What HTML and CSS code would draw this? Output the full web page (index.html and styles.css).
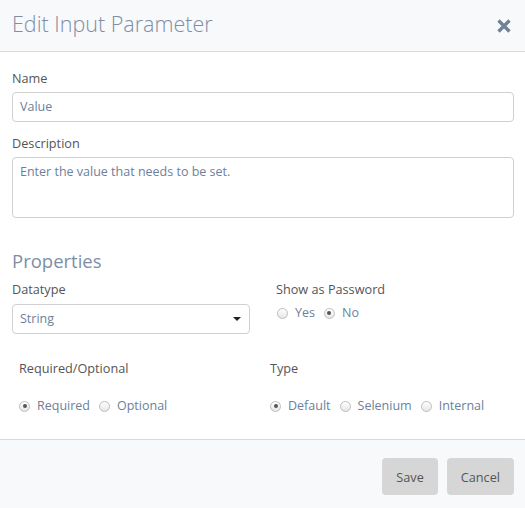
FILE: index.html
```html
<!DOCTYPE html>
<html>
<head>
<meta charset="utf-8">
<link rel="stylesheet" href="styles.css">
</head>
<body>
<div class="modal">
  <div class="header">
    <h1 class="title">Edit Input Parameter</h1>
    <svg class="close" width="16" height="16" viewBox="0 0 16 16"><path d="M2.5 2.5 L13.5 13.5 M13.5 2.5 L2.5 13.5" stroke="#6f8296" stroke-width="3.4" stroke-linecap="butt"/></svg>
  </div>
  <div class="content">
    <div class="label l-name">Name</div>
    <div class="input">Value</div>
    <div class="label l-desc">Description</div>
    <div class="textarea">Enter the value that needs to be set.</div>
    <h2 class="section">Properties</h2>
    <div class="cols">
      <div class="col">
        <div class="label">Datatype</div>
        <div class="select"><span>String</span><span class="caret"></span></div>
      </div>
      <div class="col">
        <div class="label">Show as Password</div>
        <div class="radios pw">
          <span class="radio"></span><span class="rlabel">Yes</span>
          <span class="radio on"></span><span class="rlabel">No</span>
        </div>
      </div>
    </div>
    <div class="cols cols2">
      <div class="col req">
        <div class="label">Required/Optional</div>
        <div class="radios">
          <span class="radio on"></span><span class="rlabel">Required</span>
          <span class="radio"></span><span class="rlabel">Optional</span>
        </div>
      </div>
      <div class="col type">
        <div class="label">Type</div>
        <div class="radios">
          <span class="radio on"></span><span class="rlabel">Default</span>
          <span class="radio"></span><span class="rlabel">Selenium</span>
          <span class="radio"></span><span class="rlabel">Internal</span>
        </div>
      </div>
    </div>
  </div>
  <div class="footer">
    <button class="btn">Save</button>
    <button class="btn">Cancel</button>
  </div>
</div>
</body>
</html>
```

FILE: styles.css
```css
html, body {
  margin: 0;
  padding: 0;
  background: #ffffff;
}
body {
  font-family: "Open Sans", "Liberation Sans", sans-serif;
  font-size: 13px;
  color: #555555;
}
.modal {
  width: 525px;
  height: 508px;
  display: flex;
  flex-direction: column;
}
.header {
  height: 51px;
  background: #f8f9fb;
  border-bottom: 1px solid #d9d9d9;
  display: flex;
  align-items: center;
  justify-content: space-between;
  padding: 0 13px 0 12px;
}
.title {
  margin: 0;
  font-size: 21.5px;
  font-weight: 300;
  color: #7d8fa5;
  line-height: 30px;
  position: relative;
  top: -2px;
}
.close {
  display: block;
}
.content {
  padding: 0 11px 0 12px;
  flex: 1;
  border-bottom: 1px solid #d9d9d9;
}
.label {
  font-size: 12.7px;
  line-height: 18px;
  color: #555555;
}
.l-name {
  margin-top: 17px;
}
.input, .textarea, .select {
  border: 1px solid #d0d0d0;
  border-radius: 4px;
  color: #6c7f9c;
  font-size: 12.5px;
  padding: 0 7px;
  box-sizing: border-box;
  background: #fff;
}
.input {
  height: 30px;
  line-height: 28px;
  margin-top: 5px;
}
.l-desc {
  margin-top: 12px;
}
.textarea {
  margin-top: 5px;
  height: 61px;
  padding-top: 5px;
  line-height: 18px;
}
.section {
  margin: 30px 0 0 0;
  font-size: 18.5px;
  font-weight: 400;
  color: #7d8fa5;
  line-height: 26px;
}
.cols {
  display: grid;
  grid-template-columns: 238px 1fr;
  column-gap: 26px;
  margin-top: 6px;
}
.select {
  margin-top: 6px;
  height: 30px;
  line-height: 28px;
  display: flex;
  justify-content: space-between;
  align-items: center;
}
.caret {
  width: 0;
  height: 0;
  border-left: 4px solid transparent;
  border-right: 4px solid transparent;
  border-top: 4px solid #222;
  margin-right: 1px;
}
.radios {
  display: flex;
  align-items: center;
  line-height: 18px;
  font-size: 12.5px;
}
.pw {
  margin-top: 6px;
  padding-left: 1px;
}
.radio {
  width: 9px;
  height: 9px;
  border: 1px solid #bdbdbd;
  border-radius: 50%;
  background: linear-gradient(#ffffff, #e6e6e6);
  box-sizing: content-box;
  position: relative;
  margin-right: 7px;
}
.radio.on::after {
  content: "";
  position: absolute;
  left: 2.5px;
  top: 2.5px;
  width: 4px;
  height: 4px;
  border-radius: 50%;
  background: #555;
}
.rlabel {
  color: #6c7f9c;
  margin-right: 9px;
}
.cols2 {
  margin-top: 25px;
  grid-template-columns: 251px 1fr;
  column-gap: 0;
}
.req {
  padding-left: 7px;
}
.type {
  padding-left: 7px;
}
.cols2 .radios {
  margin-top: 20px;
  padding-left: 0;
}
.footer {
  height: 68px;
  background: #f8f9fb;
  display: flex;
  justify-content: flex-end;
  align-items: flex-start;
  padding: 18px 11px 0 0;
  box-sizing: border-box;
  gap: 9px;
}
.btn {
  font-family: "Open Sans", "Liberation Sans", sans-serif;
  font-size: 12.7px;
  color: #555;
  background: #d6d6d6;
  border: none;
  border-radius: 4px;
  height: 37px;
  padding: 0 14px;
}
```
